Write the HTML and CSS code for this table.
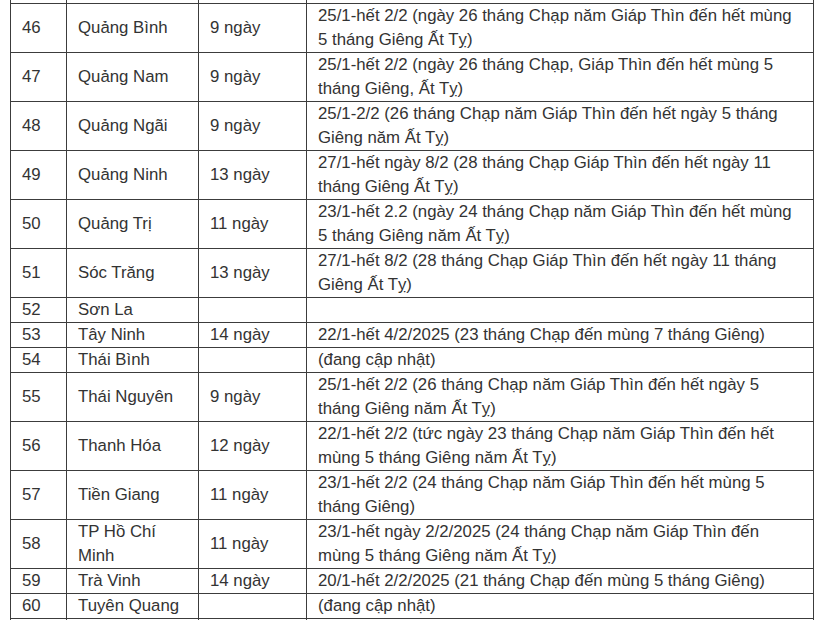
FILE: index.html
```html
<!DOCTYPE html>
<html lang="vi">
<head>
<meta charset="utf-8">
<title>Lịch nghỉ Tết</title>
<link rel="stylesheet" href="styles.css">
</head>
<body>
<div class="viewport">
<table class="holidays">
<colgroup>
<col class="c-no"><col class="c-name"><col class="c-days"><col class="c-time">
</colgroup>
<tbody>
<tr class="stub"><td></td><td></td><td></td><td></td></tr>
<tr><td>46</td><td>Quảng Bình</td><td>9 ngày</td><td>25/1-hết 2/2 (ngày 26 tháng Chạp năm Giáp Thìn đến hết mùng 5 tháng Giêng Ất Tỵ)</td></tr>
<tr><td>47</td><td>Quảng Nam</td><td>9 ngày</td><td>25/1-hết 2/2 (ngày 26 tháng Chạp, Giáp Thìn đến hết mùng 5 tháng Giêng, Ất Tỵ)</td></tr>
<tr><td>48</td><td>Quảng Ngãi</td><td>9 ngày</td><td>25/1-2/2 (26 tháng Chạp năm Giáp Thìn đến hết ngày 5 tháng Giêng năm Ất Tỵ)</td></tr>
<tr><td>49</td><td>Quảng Ninh</td><td>13 ngày</td><td>27/1-hết ngày 8/2 (28 tháng Chạp Giáp Thìn đến hết ngày 11 tháng Giêng Ất Tỵ)</td></tr>
<tr><td>50</td><td>Quảng Trị</td><td>11 ngày</td><td>23/1-hết 2.2 (ngày 24 tháng Chạp năm Giáp Thìn đến hết mùng 5 tháng Giêng năm Ất Tỵ)</td></tr>
<tr><td>51</td><td>Sóc Trăng</td><td>13 ngày</td><td>27/1-hết 8/2 (28 tháng Chạp Giáp Thìn đến hết ngày 11 tháng Giêng Ất Tỵ)</td></tr>
<tr><td>52</td><td>Sơn La</td><td></td><td></td></tr>
<tr><td>53</td><td>Tây Ninh</td><td>14 ngày</td><td>22/1-hết 4/2/2025 (23 tháng Chạp đến mùng 7 tháng Giêng)</td></tr>
<tr><td>54</td><td>Thái Bình</td><td></td><td>(đang cập nhật)</td></tr>
<tr><td>55</td><td>Thái Nguyên</td><td>9 ngày</td><td>25/1-hết 2/2 (26 tháng Chạp năm Giáp Thìn đến hết ngày 5 tháng Giêng năm Ất Tỵ)</td></tr>
<tr><td>56</td><td>Thanh Hóa</td><td>12 ngày</td><td>22/1-hết 2/2 (tức ngày 23 tháng Chạp năm Giáp Thìn đến hết mùng 5 tháng Giêng năm Ất Tỵ)</td></tr>
<tr><td>57</td><td>Tiền Giang</td><td>11 ngày</td><td>23/1-hết 2/2 (24 tháng Chạp năm Giáp Thìn đến hết mùng 5 tháng Giêng)</td></tr>
<tr><td>58</td><td>TP Hồ Chí Minh</td><td>11 ngày</td><td>23/1-hết ngày 2/2/2025 (24 tháng Chạp năm Giáp Thìn đến mùng 5 tháng Giêng năm Ất Tỵ)</td></tr>
<tr><td>59</td><td>Trà Vinh</td><td>14 ngày</td><td>20/1-hết 2/2/2025 (21 tháng Chạp đến mùng 5 tháng Giêng)</td></tr>
<tr><td>60</td><td>Tuyên Quang</td><td></td><td>(đang cập nhật)</td></tr>
<tr><td>61</td><td>Vĩnh Long</td><td>9 ngày</td><td>25/1-hết 2/2 (26 tháng Chạp năm Giáp Thìn đến hết mùng 5 tháng Giêng năm Ất Tỵ)</td></tr>
</tbody>
</table>
</div>
</body>
</html>
```
FILE: styles.css
```css
html, body {
  margin: 0;
  padding: 0;
  background: #fff;
}

.viewport {
  height: 620px;
  overflow: hidden;
}

.holidays {
  margin: -46px 0 0 10px;
  width: 803px;
  border-collapse: collapse;
  table-layout: fixed;
  font-family: "Liberation Sans", Arial, sans-serif;
  font-size: 16.8px;
  line-height: 24px;
  color: #333;
}

.c-no { width: 56px; }
.c-name { width: 132px; }
.c-days { width: 108px; }
.c-time { width: 507px; }

.holidays td {
  border: 1px solid #3c3c3c;
  padding: 0 11px;
  vertical-align: middle;
}

.holidays .stub td {
  height: 48px;
  padding: 0;
}
```
